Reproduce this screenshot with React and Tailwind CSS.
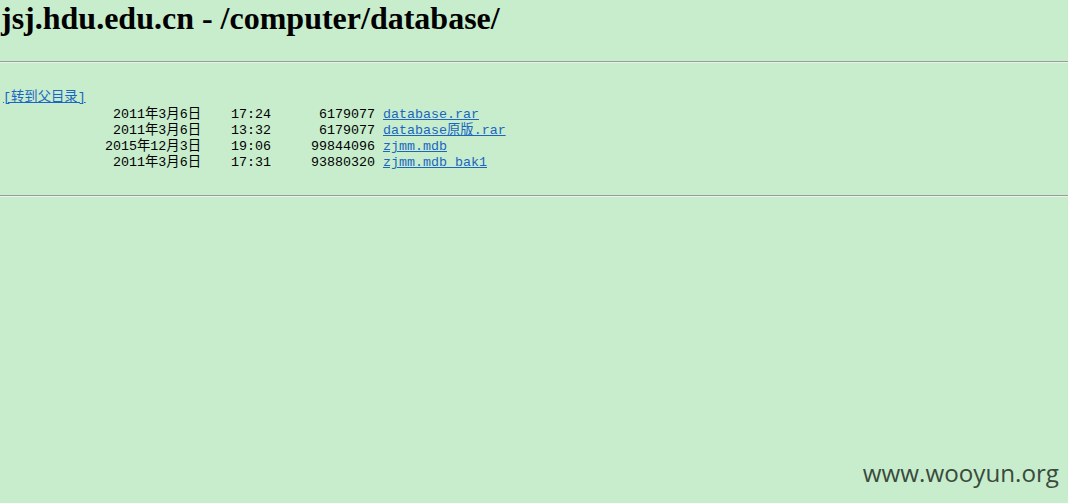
import React from 'react';

const files = [
  { date: '2011年3月6日', time: '17:24', size: '6179077', name: 'database.rar' },
  { date: '2011年3月6日', time: '13:32', size: '6179077', name: 'database原版.rar' },
  { date: '2015年12月3日', time: '19:06', size: '99844096', name: 'zjmm.mdb' },
  { date: '2011年3月6日', time: '17:31', size: '93880320', name: 'zjmm.mdb_bak1' },
];

const mono = "font-['Liberation_Mono','Noto_Sans_CJK_SC',monospace]";

export default function App() {
  return (
    <div className="relative w-[1068px] h-[503px] overflow-hidden bg-[#c7edcc] text-black">
      <h1 className="pl-[1px] text-[32px] leading-[36px] font-bold font-['Liberation_Serif',serif]">
        jsj.hdu.edu.cn - /computer/database/
      </h1>
      <hr className="mt-[25px] border-0 border-t border-b border-t-[#9a9a9a] border-b-[#e6f5e8]" />
      <div className={`${mono} text-[13.33px] leading-[16px] mt-[27px]`}>
        <div className="pl-[3px]">
          <a href="#" className="text-[#1a66c2] underline">[转到父目录]</a>
        </div>
        <div className="mt-[1px]">
          {files.map((f) => (
            <div key={f.name} className="flex whitespace-pre">
              <span className="w-[201px] text-right">{f.date}</span>
              <span className="w-[30px]" />
              <span className="w-[40px]">{f.time}</span>
              <span className="w-[104px] text-right">{f.size}</span>
              <span className="w-[8px]" />
              <a href="#" className="text-[#1a66c2] underline">{f.name}</a>
            </div>
          ))}
        </div>
      </div>
      <hr className="mt-[24px] border-0 border-t border-b border-t-[#9a9a9a] border-b-[#e6f5e8]" />
      <div className="absolute right-[9px] bottom-[16px] text-[24.2px] leading-[28px] text-[#3a4a3c] font-['Open_Sans',sans-serif]">
        www.wooyun.org
      </div>
    </div>
  );
}
